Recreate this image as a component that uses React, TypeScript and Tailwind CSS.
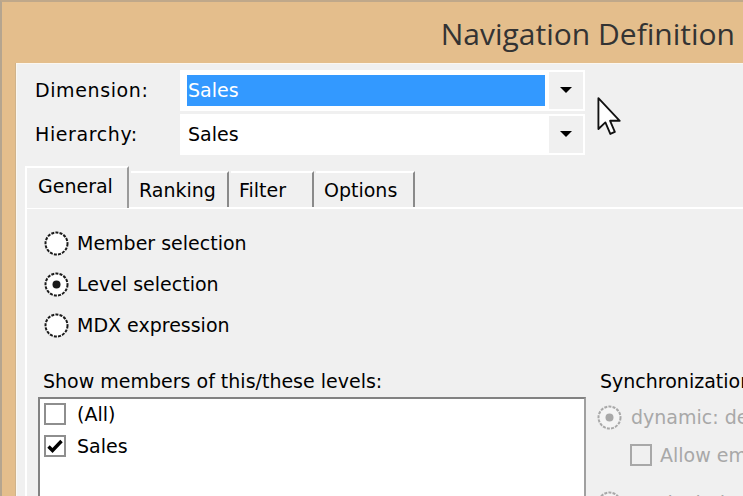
import React from 'react';

const ui = { fontFamily: '"DejaVu Sans", Verdana, sans-serif' };

function Arrow() {
  return (
    <svg width="12" height="7" viewBox="0 0 12 7">
      <polygon points="0,0 12,0 6,6" fill="#000" />
    </svg>
  );
}

function Combo({ value, selected }: { value: string; selected?: boolean }) {
  return (
    <div className="w-[405px] h-[41px] bg-white p-[2px] flex">
      <div className="flex-1 flex items-center pl-[5px] pr-[4px]">
        <div
          className={
            'w-full h-[31px] flex items-center pl-[1px] ' +
            (selected ? 'bg-[#3399ff] text-white' : 'text-black')
          }
        >
          {value}
        </div>
      </div>
      <div className="w-[34px] bg-[#f0f0f0] flex items-center justify-center">
        <Arrow />
      </div>
    </div>
  );
}

function Radio({ checked, disabled }: { checked?: boolean; disabled?: boolean }) {
  const c = disabled ? '#a8a8a8' : '#1a1a1a';
  return (
    <svg width="25" height="25" viewBox="0 0 25 25">
      <circle cx="12.5" cy="12.5" r="11" fill={disabled ? '#f4f4f4' : '#fff'} stroke={c} strokeWidth="2" strokeDasharray="3 1.2" />
      {checked && <circle cx="12.5" cy="12.5" r="4" fill={c} />}
    </svg>
  );
}

function Check({ checked, disabled }: { checked?: boolean; disabled?: boolean }) {
  return (
    <div
      className={
        'w-[22px] h-[22px] border-2 flex items-center justify-center shrink-0 ' +
        (disabled ? 'border-[#a8a8a8] bg-[#f0f0f0]' : 'border-[#8e8e8e] bg-white')
      }
    >
      {checked && (
        <svg width="16" height="14" viewBox="0 0 16 14">
          <path d="M1.5 7.5 L5.5 11.5 L14.5 2" fill="none" stroke="#000" strokeWidth="3.4" strokeLinejoin="miter" />
        </svg>
      )}
    </div>
  );
}

function Tab({ label, active, w }: { label: string; active?: boolean; w: string }) {
  if (active) {
    return (
      <div className={`${w} h-[42px] -mb-[1px] bg-[#f0f0f0] border-l-2 border-t-2 border-white border-r-2 border-r-[#9a9a9a] flex items-center pl-[11px] pb-[4px] z-10`}>
        {label}
      </div>
    );
  }
  return (
    <div className={`${w} h-[36px] mt-[5px] bg-[#f0f0f0] border-t-2 border-white border-r-2 border-r-[#8a8a8a] flex items-center pl-[8px]`}>
      {label}
    </div>
  );
}

function Cursor() {
  return (
    <svg className="absolute left-[580px] top-[33px]" width="26" height="40" viewBox="0 0 12.5 19.5">
      <polygon
        points="0.6,0.6 0.6,15.6 4,12.4 6.4,18 8.6,17 6.3,11.6 11,11.6"
        fill="#fff"
        stroke="#111"
        strokeWidth="0.9"
        strokeLinejoin="round"
      />
    </svg>
  );
}

export default function App() {
  return (
    <div
      className="w-[743px] h-[496px] overflow-hidden bg-[#e4be8c] border-t-2 border-[#bfa88a] border-l-2 border-l-[#b5a58f] flex flex-col"
      style={ui}
    >
      <div className="h-[61px] flex items-center justify-end pr-[8px] pt-[2px] shrink-0">
        <span className="text-[30px] text-[#333]" style={{ fontFamily: '"Open Sans", "Noto Sans", sans-serif' }}>
          Navigation Definition
        </span>
      </div>
      <div className="flex flex-1 min-h-0">
        <div className="w-[14px] shrink-0 border-r border-[#cfb38c]" />
        <div className="flex-1 bg-[#f0f0f0] border-l border-t border-[#fbf7f0] relative text-[19px] text-black">
          <Cursor />
          <div className="pt-[6px] pl-[18px] flex flex-col gap-[3px]">
            <div className="flex items-center">
              <span className="w-[145px] tracking-[0.6px]">Dimension:</span>
              <Combo value="Sales" selected />
            </div>
            <div className="flex items-center">
              <span className="w-[145px] tracking-[0.6px]">Hierarchy:</span>
              <Combo value="Sales" />
            </div>
          </div>

          <div className="mt-[11px] pl-[8px] flex items-end gap-[2px]">
            <Tab label="General" active w="w-[104px]" />
            <Tab label="Ranking" w="w-[98px]" />
            <Tab label="Filter" w="w-[83px]" />
            <Tab label="Options" w="w-[99px]" />
          </div>
          <div className="ml-[8px] border-t-2 border-l-2 border-white">
            <div className="pt-[14px] pl-[17px] flex flex-col">
              <div className="h-[41px] flex items-center gap-[8px]">
                <Radio />
                <span>Member selection</span>
              </div>
              <div className="h-[41px] flex items-center gap-[8px]">
                <Radio checked />
                <span>Level selection</span>
              </div>
              <div className="h-[41px] flex items-center gap-[8px]">
                <Radio />
                <span>MDX expression</span>
              </div>
            </div>

            <div className="mt-[24px] pl-[11px] flex gap-[11px]">
              <div className="w-[548px] shrink-0 flex flex-col">
                <div className="h-[22px] pl-[5px] leading-[22px] mb-[5px]">Show members of this/these levels:</div>
                <div className="h-[120px] bg-white border-2 border-[#828282] border-r-[#a0a0a0] pt-[4px] pl-[4px] flex flex-col gap-[10px]">
                  <div className="h-[22px] flex items-center gap-[11px]">
                    <Check />
                    <span>(All)</span>
                  </div>
                  <div className="h-[22px] flex items-center gap-[11px]">
                    <Check checked />
                    <span>Sales</span>
                  </div>
                </div>
              </div>
              <div className="flex flex-col whitespace-nowrap">
                <div className="h-[22px] leading-[22px] mb-[5px] pl-[3px]">Synchronization</div>
                <div className="h-[40px] flex items-center gap-[9px] text-[#a8a8a8]">
                  <Radio checked disabled />
                  <span>dynamic: dependent</span>
                </div>
                <div className="h-[36px] flex items-center gap-[8px] pl-[33px] text-[#a8a8a8]">
                  <Check disabled />
                  <span>Allow empty</span>
                </div>
                <div className="h-[40px] flex items-center gap-[9px] text-[#a8a8a8] mt-[10px]">
                  <Radio disabled />
                  <span>static: independent</span>
                </div>
              </div>
            </div>
          </div>
        </div>
      </div>
    </div>
  );
}
